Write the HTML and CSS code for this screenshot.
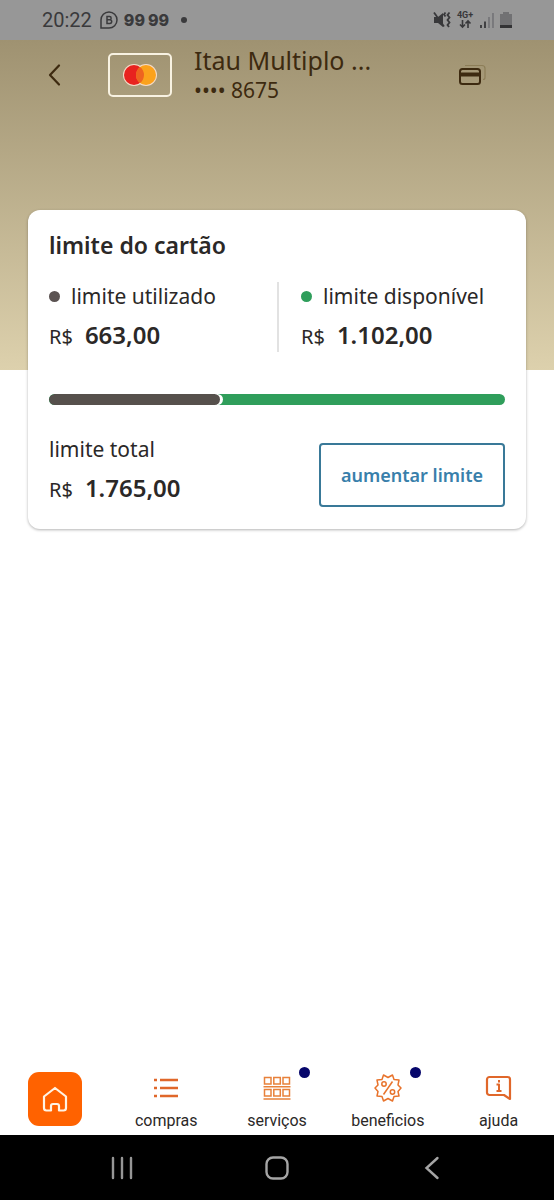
FILE: index.html
```html
<!DOCTYPE html>
<html lang="pt-BR">
<head>
    <meta charset="UTF-8">
    <meta name="viewport" content="width=device-width, initial-scale=1">
    <title>Limite do cartão</title>
    <link rel="stylesheet" href="styles.css">
</head>
<body>
<div class="app">

    <!-- status bar -->
    <div class="status">
        <span class="time">20:22</span>
        <svg class="status-chat" width="18" height="18" viewBox="0 0 18 18" fill="none" stroke="#3a3a3c" stroke-width="1.5">
            <path d="M1 17V9a8 8 0 1 1 8 8z"/>
            <path d="M7 5.500h2.500a1.600 1.600 0 0 1 0 3.300H7zM7 8.800h2.900a1.800 1.800 0 0 1 0 3.600H7z"/>
        </svg>
        <span class="alerts"><span>99</span><span>99</span></span>
        <span class="status-dot"></span>
        <div class="status-right">
            <svg width="18" height="18" viewBox="0 0 18 18" fill="none" stroke="#38383a" stroke-width="1.800">
                <path d="M1 6h4l5-4v14l-5-4H1z" fill="#38383a" stroke="none"/>
                <path d="M1 1.500l10 14"/>
                <path d="M12.500 1.500l-1.500 2 1.500 2M16.500 1.500l-2 2.500 2 2.500-2 2.500 2 2.500-2 2.500 1.500 2"/>
            </svg>
            <svg width="18" height="18" viewBox="0 0 18 18">
                <text class="network" x="9" y="7" text-anchor="middle">4G+</text>
                <path d="M6.500 9v7M4 13.500l2.500 2.500L9 13.500M12 17v-7M9.500 12.500L12 10l2.500 2.500" fill="none" stroke="#38383a" stroke-width="1.600"/>
            </svg>
            <svg width="16" height="18" viewBox="0 0 16 18" fill="none" stroke-width="1.800">
                <path d="M2 17v-3M6 17v-6.500" stroke="#38383a"/>
                <path d="M10 17V6M14 17V2" stroke="#77777a"/>
            </svg>
            <svg width="12" height="18" viewBox="0 0 12 18">
                <path d="M3 1h6v2h3v14H0V3h3z" fill="#717173"/>
                <path d="M0 14h12v3H0z" fill="#333335"/>
            </svg>
        </div>
    </div>

    <main class="content">
        <header class="card-header">
            <a class="back" href="#" aria-label="voltar">
                <svg width="14" height="24" viewBox="0 0 14 24" fill="none" stroke="#3d2a10" stroke-width="2.200" stroke-linecap="round" stroke-linejoin="round">
                    <path d="M11 2.500L2 12l9 9.500"/>
                </svg>
            </a>
            <div class="brand">
                <svg width="36" height="24" viewBox="0 0 36 24">
                    <circle cx="12" cy="12" r="11" fill="#f5dcc8"/>
                    <circle cx="24" cy="12" r="11" fill="#f5dcc8"/>
                    <circle cx="12" cy="12" r="10" fill="#e8231f"/>
                    <circle cx="24" cy="12" r="10" fill="#fba21c"/>
                    <path d="M18 4a10 10 0 0 1 0 16 10 10 0 0 1 0-16z" fill="#ee6420"/>
                </svg>
            </div>
            <div class="card-name">
                <h1>Itau Multiplo ...</h1>
                <p>•••• 8675</p>
            </div>
            <button class="switch-card" type="button" aria-label="trocar cartão">
                <svg width="28" height="22" viewBox="0 0 28 22" fill="none">
                    <path d="M7 1.500h17a3 3 0 0 1 3 3v9a2 2 0 0 1-2 2" stroke="#8d7e58" stroke-width="1.200"/>
                    <rect x="2" y="5" width="20" height="15" rx="2.500" stroke="#3d2a10" stroke-width="2"/>
                    <path d="M2 8.500h20v4H2z" fill="#3d2a10"/>
                </svg>
            </button>
        </header>

        <section class="limit">
            <h2>limite do cartão</h2>
            <div class="columns">
                <div class="column">
                    <p class="label"><span class="dot used"></span>limite utilizado</p>
                    <p class="money"><span>R$</span><strong>663,00</strong></p>
                </div>
                <div class="column available">
                    <p class="label"><span class="dot free"></span>limite disponível</p>
                    <p class="money"><span>R$</span><strong>1.102,00</strong></p>
                </div>
            </div>
            <div class="bar">
                <div class="bar-used" style="width: 37.560%"></div>
            </div>
            <div class="total">
                <div>
                    <p class="label">limite total</p>
                    <p class="money"><span>R$</span><strong>1.765,00</strong></p>
                </div>
                <button class="increase" type="button">aumentar limite</button>
            </div>
        </section>
    </main>

    <nav class="tabs">
        <a class="home" href="#" aria-label="início">
            <svg width="26" height="26" viewBox="0 0 26 26" fill="none" stroke="#fff3e4" stroke-width="2.200" stroke-linejoin="round">
                <path d="M2 10.500L13 2l11 8.500V22a2.500 2.500 0 0 1-2.500 2.500H17V20a2 2 0 0 0-2-2h-4a2 2 0 0 0-2 2v4.500H4.500A2.500 2.500 0 0 1 2 22z"/>
            </svg>
        </a>
        <a class="tab" href="#">
            <svg width="28" height="28" viewBox="0 0 28 28" fill="none" stroke="#e0672a" stroke-width="2.600">
                <path d="M2 6h3M8 6h18M2 14h3M8 14h18M2 22h3M8 22h18"/>
            </svg>
            compras
        </a>
        <a class="tab" href="#">
            <svg width="28" height="28" viewBox="0 0 28 28" fill="none" stroke="#e8813a" stroke-width="1.500">
                <path d="M1.500 3.500h6.500v6.500h-6.500zM10.800 3.500h6.500v6.500h-6.500zM20 3.500h6.500v6.500h-6.500zM1.500 15.500h6.500v6.500h-6.500zM10.800 15.500h6.500v6.500h-6.500zM20 15.500h6.500v6.500h-6.500zM.5 12.800h27M.5 25h27"/>
            </svg>
            <span class="badge"></span>
            serviços
        </a>
        <a class="tab" href="#">
            <svg width="28" height="28" viewBox="0 0 28 28" fill="none" stroke="#e8732c" stroke-width="1.500" stroke-linejoin="round">
                <path d="M14 3.500L18.500 1l1.500 4.500 5 .5-1 5 3 3-3 3.500 1 4.500-5 .5-1.500 4.500L14 24.500 9.500 27 8 22.500 3 22l1-4.500L1 14l3-3-1-5 5-.5L9.500 1z"/>
                <path d="M18.500 7.500l-9 13"/>
                <circle cx="10" cy="10" r="2.200"/>
                <circle cx="18.500" cy="18" r="2.200"/>
            </svg>
            <span class="badge"></span>
            beneficios
        </a>
        <a class="tab" href="#">
            <svg width="28" height="28" viewBox="0 0 28 28" fill="none" stroke="#e0672a" stroke-width="2.200" stroke-linejoin="round">
                <path d="M4.500 3h18A2.500 2.500 0 0 1 25 5.500V25l-6-4H4.500A2.500 2.500 0 0 1 2 18.500v-13A2.500 2.500 0 0 1 4.500 3z"/>
                <path d="M14 6v2.500M11.500 10.500H14V17M11.500 17h5" stroke-width="2"/>
            </svg>
            ajuda
        </a>
    </nav>

    <!-- android buttons -->
    <div class="system">
        <button type="button" aria-label="recentes">
            <svg width="26" height="26" viewBox="0 0 26 26" stroke="#969696" stroke-width="2.400" stroke-linecap="round">
                <path d="M4 3v20M13 3v20M22 3v20"/>
            </svg>
        </button>
        <button type="button" aria-label="início do sistema">
            <svg width="26" height="26" viewBox="0 0 26 26" fill="none" stroke="#a5a5a5" stroke-width="2.400">
                <rect x="2.500" y="2.500" width="21" height="21" rx="6.500"/>
            </svg>
        </button>
        <button type="button" aria-label="voltar do sistema">
            <svg width="26" height="26" viewBox="0 0 26 26" fill="none" stroke="#a5a5a5" stroke-width="2.400" stroke-linecap="round">
                <path d="M18.500 3L7.500 13l11 10"/>
            </svg>
        </button>
    </div>
</div>
</body>
</html>
```

FILE: styles.css
```css
* {
    margin: 0;
    padding: 0;
    box-sizing: border-box;
}

body {
    font-family: "Noto Sans", "Open Sans", sans-serif;
    color: #2b2827;
    background-color: #fff;
}

a {
    color: inherit;
    text-decoration: none;
}

button {
    font-family: inherit;
    background: none;
    border: none;
    cursor: pointer;
}

svg {
    display: block;
}

.app {
    min-height: 100vh;
    display: flex;
    flex-direction: column;
}

/* status bar */
.status {
    height: 40px;
    padding: 0 42px;
    display: flex;
    align-items: center;
    background-color: #979797;
    color: #3a3a3c;
    font: 20px/24px Roboto, sans-serif;
}

.status-chat {
    margin: 0 6px 0 8px;
}

.alerts {
    display: flex;
    gap: 3px;
    font: 800 16px/24px Inter, sans-serif;
}

.status-dot {
    width: 6px;
    height: 6px;
    margin-left: 12px;
    border-radius: 50%;
    background-color: #3a3a3c;
}

.status-right {
    margin-left: auto;
    display: flex;
    gap: 5px;
}

.network {
    font: bold 9px Roboto, sans-serif;
    fill: #38383a;
}

/* gold area behind the header and the top of the card */
.content {
    flex: 1;
    padding: 0 28px;
    background: linear-gradient(#9f9271, #ddd1ad) no-repeat top / 100% 330px;
}

.card-header {
    height: 70px;
    padding: 0 40px 0 20px;
    display: flex;
    align-items: center;
    color: #3d2a10;
}

.brand {
    width: 64px;
    height: 44px;
    margin: 0 22px 0 46px;
    display: flex;
    align-items: center;
    justify-content: center;
    border: 2px solid #f8f2e2;
    border-radius: 5px;
}

.card-name {
    flex: 1;
}

.card-name h1 {
    font-size: 25px;
    line-height: 30px;
    font-weight: 400;
}

.card-name p {
    font-size: 21px;
    line-height: 30px;
}

/* limit card */
.limit {
    margin-top: 100px;
    padding: 20px 21px 22px;
    background-color: #fff;
    border-radius: 12px;
    box-shadow: 0 1px 3px rgba(0, 0, 0, 0.3);
}

.limit h2 {
    font-size: 23px;
    line-height: 30px;
    font-weight: 600;
}

.columns {
    margin-top: 22px;
    display: flex;
}

.column {
    width: 50%;
}

.available {
    padding-left: 22px;
    border-left: 2px solid #e2e2e2;
}

.label {
    display: flex;
    align-items: center;
    font-size: 21px;
    line-height: 28px;
}

.dot {
    width: 11px;
    height: 11px;
    margin-right: 11px;
    border-radius: 50%;
}

.used {
    background-color: #5b5352;
}

.free {
    background-color: #2f9e5b;
}

.money {
    margin-top: 10px;
    display: flex;
    align-items: baseline;
    gap: 12px;
    font-size: 20px;
    line-height: 30px;
}

.money strong {
    font-size: 24px;
    font-weight: 600;
}

.bar {
    height: 11px;
    margin-top: 42px;
    border-radius: 6px;
    background-color: #2f9e5b;
    overflow: hidden;
}

.bar-used {
    height: 100%;
    border-radius: 6px;
    background-color: #56504c;
    box-shadow: 3px 0 0 #fff;
}

.total {
    margin-top: 30px;
    display: flex;
    justify-content: space-between;
}

.increase {
    height: 64px;
    margin-top: 8px;
    padding: 0 20px;
    border: 2px solid #397998;
    border-radius: 4px;
    color: #397fab;
    font-size: 18px;
    font-weight: 600;
}

/* bottom tabs */
.tabs {
    height: 75px;
    display: flex;
    font: 16px/20px Roboto, sans-serif;
}

.home,
.tab {
    flex: 1;
    position: relative;
}

.home {
    flex: none;
    width: 54px;
    height: 54px;
    margin: 12px calc((20% - 54px) / 2);
    display: flex;
    align-items: center;
    justify-content: center;
    border-radius: 11px;
    background-color: #ff6200;
}

.tab {
    padding-top: 14px;
    display: flex;
    flex-direction: column;
    align-items: center;
    gap: 9px;
}

.badge {
    position: absolute;
    top: 7px;
    left: calc(50% + 22px);
    width: 11px;
    height: 11px;
    border-radius: 50%;
    background-color: #06066b;
}

/* android buttons */
.system {
    height: 65px;
    padding: 0 8%;
    display: flex;
    background-color: #000;
}

.system button {
    flex: 1;
    display: flex;
    align-items: center;
    justify-content: center;
}
```
